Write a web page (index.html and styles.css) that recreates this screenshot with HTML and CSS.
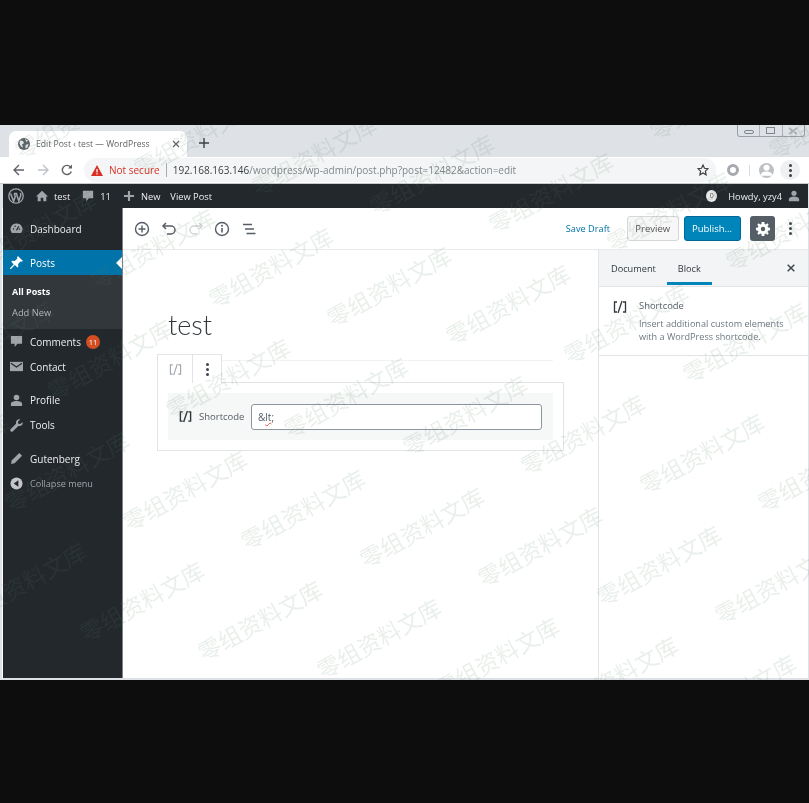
FILE: index.html
```html
<!DOCTYPE html>
<html lang="en">
<head>
  <meta charset="UTF-8">
  <title>Edit Post ‹ test — WordPress</title>
  <link rel="stylesheet" href="styles.css">
</head>
<body>

  <div class="window">

    <div class="tabstrip">
      <div class="tab">
        <svg class="favicon" viewBox="0 0 12 12"><circle cx="6" cy="6" r="6" fill="#5f6368"/><path d="M2 2.500l3 .5 1 2-2 1.500 1 3-2-1-1.500-3zM7 1l3 1.500-1.500 1.500zM7.500 7l3-1-1 3.500-2 1z" fill="#e8eaed"/></svg>
        <span class="tab-title">Edit Post ‹ test — WordPress</span>
        <svg class="tab-close" viewBox="0 0 8 8"><path d="M1 1l6 6M7 1L1 7" stroke="#5f6368" stroke-width="1.200"/></svg>
      </div>
      <svg class="new-tab" viewBox="0 0 10 10"><path d="M5 0v10M0 5h10" stroke="#3c4043" stroke-width="1.400"/></svg>
      <div class="win-controls">
        <span class="win-btn"><i class="win-min"></i></span>
        <span class="win-btn"><i class="win-max"></i></span>
        <span class="win-btn win-close">
          <svg viewBox="0 0 10 8"><path d="M1 1l8 6M9 1L1 7" stroke="#aeb3b8" stroke-width="1.800"/></svg>
        </span>
      </div>
    </div>

    <div class="toolbar">
      <svg class="nav-icon" viewBox="0 0 12 12"><path d="M11 6H1.500M6 1L1 6l5 5" fill="none" stroke="#5f6368" stroke-width="1.400"/></svg>
      <svg class="nav-icon" viewBox="0 0 12 12"><path d="M1 6h9.500M6 1l5 5-5 5" fill="none" stroke="#bdc1c6" stroke-width="1.400"/></svg>
      <svg class="nav-icon" viewBox="0 0 12 12"><path d="M10.300 7.500A4.600 4.600 0 1 1 9.500 3" fill="none" stroke="#5f6368" stroke-width="1.400"/><path d="M11 0.500v4H7z" fill="#5f6368"/></svg>
      <div class="omnibox">
        <svg class="warn" viewBox="0 0 12 11"><path d="M6 0l6 11H0z" fill="#d93025"/><path d="M5.400 4h1.200v3.500H5.400zM5.400 8.200h1.200v1.200H5.400z" fill="#fff"/></svg>
        <span class="not-secure">Not secure</span>
        <span class="omni-sep"></span>
        <span class="url"><b>192.168.163.146</b>/wordpress/wp-admin/post.php?post=12482&amp;action=edit</span>
        <svg class="star" viewBox="0 0 12 12"><path d="M6 1l1.500 3.300 3.500.4-2.600 2.400.7 3.600L6 8.900l-3.100 1.800.7-3.600L1 4.700l3.500-.4z" fill="none" stroke="#3c4043" stroke-width="1.200"/></svg>
      </div>
      <span class="ext-ring"></span>
      <span class="ext-sep"></span>
      <span class="avatar">
        <svg viewBox="0 0 14 14"><circle cx="7" cy="4.500" r="2.800" fill="#fff"/><path d="M1.500 12c0-3 3-4 5.500-4s5.500 1 5.500 4z" fill="#fff"/></svg>
      </span>
      <span class="chrome-menu"><i></i><i></i><i></i></span>
    </div>

    <div class="adminbar">
      <svg class="wp-logo" viewBox="0 0 16 16"><circle cx="8" cy="8" r="7.200" fill="none" stroke="#a0a5aa" stroke-width="1.300"/><path d="M2.600 5.500l3 7.800 1.700-4.800-1.200-3M6 5.500h3.200M8.300 5.500l2.500 7.500 1.900-5.500c.4-1 0-1.800-.4-2.400" fill="none" stroke="#a0a5aa" stroke-width="1.500"/></svg>
      <svg class="bar-icon home-icon" viewBox="0 0 14 14"><path d="M7 1L0 7.500h2V13h3.500V9h3v4H12V7.500h2z" fill="#a0a5aa"/></svg>
      <span class="bar-link bar-site">test</span>
      <svg class="bar-icon comment-icon" viewBox="0 0 14 14"><path d="M1 1h12v8.500H8L5 13V9.500H1z" fill="#a0a5aa"/></svg>
      <span class="bar-link bar-count">11</span>
      <svg class="bar-icon plus-icon" viewBox="0 0 12 12"><path d="M6 0v12M0 6h12" stroke="#a0a5aa" stroke-width="2.600"/></svg>
      <span class="bar-link bar-new">New</span>
      <span class="bar-link">View Post</span>
      <span class="bar-spacer"></span>
      <span class="bar-badge">0</span>
      <span class="bar-link bar-howdy">Howdy, yzy4</span>
      <svg class="bar-icon user-icon" viewBox="0 0 14 14"><circle cx="7" cy="3.800" r="3" fill="#a0a5aa"/><path d="M1 13v-2.500C1 8.500 4 7.500 7 7.500s6 1 6 3V13z" fill="#a0a5aa"/></svg>
    </div>

    <div class="admin-body">

      <nav class="adminmenu">
        <a class="menu-item menu-first">
          <svg viewBox="0 0 14 14"><path d="M7 1.500a6.300 6.300 0 0 0-5 10.300h10A6.300 6.300 0 0 0 7 1.500z" fill="#a0a5aa"/><path d="M7 9l2.500-4.500" stroke="#23282d" stroke-width="1.300"/><circle cx="3.800" cy="7.500" r=".8" fill="#23282d"/><circle cx="5.500" cy="4.500" r=".8" fill="#23282d"/><circle cx="10.200" cy="7.500" r=".8" fill="#23282d"/></svg>
          Dashboard
        </a>
        <a class="menu-item menu-current">
          <svg viewBox="0 0 14 14"><path d="M8.500 0l5.500 5.500-1.300.8-1-.6-3 3 .3 2.800-1 1-2.700-2.800L1 14l-1 0 0-.8 4-4.300L1.300 6.200l1-1 2.800.3 3-3-.6-1z" fill="#fff"/></svg>
          Posts
        </a>
        <div class="submenu">
          <a class="sub-current">All Posts</a>
          <a>Add New</a>
        </div>
        <a class="menu-item">
          <svg viewBox="0 0 14 14"><path d="M1 1h12v8.500H8L5 13V9.500H1z" fill="#a0a5aa"/></svg>
          Comments <span class="count-badge">11</span>
        </a>
        <a class="menu-item">
          <svg viewBox="0 0 14 14"><path d="M0 2h14v10H0z" fill="#a0a5aa"/><path d="M1 3.500l6 4 6-4" fill="none" stroke="#23282d" stroke-width="1.300"/></svg>
          Contact
        </a>
        <a class="menu-item menu-gap">
          <svg viewBox="0 0 14 14"><circle cx="7" cy="3.800" r="3" fill="#a0a5aa"/><path d="M1 13v-2.500C1 8.500 4 7.500 7 7.500s6 1 6 3V13z" fill="#a0a5aa"/></svg>
          Profile
        </a>
        <a class="menu-item">
          <svg viewBox="0 0 14 14"><path d="M13.500 3.500l-2.500 2-2-.5-.5-2L11 .5C8.500-.3 6 1.500 6.500 5L.8 10.800a1.600 1.600 0 0 0 2.400 2.400L9 7.500c3.500.5 5.300-1.500 4.500-4z" fill="#a0a5aa"/></svg>
          Tools
        </a>
        <a class="menu-item menu-gap">
          <svg viewBox="0 0 14 14"><path d="M10 1l3 3-8 8-4 1 1-4z" fill="#a0a5aa"/></svg>
          Gutenberg
        </a>
        <a class="menu-item menu-collapse">
          <svg viewBox="0 0 14 14"><circle cx="7" cy="7" r="6.500" fill="#c4c7ca"/><path d="M9 3.500v7L4 7z" fill="#23282d"/></svg>
          Collapse menu
        </a>
      </nav>

      <div class="editor">
        <header class="editor-header">
          <svg class="tool-icon" viewBox="0 0 16 16"><circle cx="8" cy="8" r="6.500" fill="none" stroke="#555d66" stroke-width="1.400"/><path d="M8 4.500v7M4.500 8h7" stroke="#555d66" stroke-width="1.400"/></svg>
          <svg class="tool-icon" viewBox="0 0 16 16"><path d="M5 2L2 5l3 3" fill="none" stroke="#555d66" stroke-width="1.500"/><path d="M2.500 5H10a3.800 3.800 0 0 1 0 8H6" fill="none" stroke="#555d66" stroke-width="1.500"/></svg>
          <svg class="tool-icon" viewBox="0 0 16 16"><path d="M11 2l3 3-3 3" fill="none" stroke="#d0d3d6" stroke-width="1.500"/><path d="M13.500 5H6a3.800 3.800 0 0 0 0 8h4" fill="none" stroke="#d0d3d6" stroke-width="1.500"/></svg>
          <svg class="tool-icon" viewBox="0 0 16 16"><circle cx="8" cy="8" r="6.500" fill="none" stroke="#555d66" stroke-width="1.400"/><path d="M8 7v4.500" stroke="#555d66" stroke-width="1.600"/><circle cx="8" cy="4.800" r="1" fill="#555d66"/></svg>
          <svg class="tool-icon" viewBox="0 0 16 16"><path d="M2 3.500h9M4 8h9M5.500 12.500h9" stroke="#555d66" stroke-width="1.400"/></svg>
          <span class="header-spacer"></span>
          <a class="save-draft">Save Draft</a>
          <button class="btn-preview">Preview</button>
          <button class="btn-publish">Publish...</button>
          <span class="btn-gear">
            <svg viewBox="0 0 16 16"><path fill-rule="evenodd" d="M6.500 0h3l.4 2.200 1.300.6L13 1.500 14.500 3l-1.300 1.900.6 1.300 2.200.3v3l-2.200.4-.6 1.300 1.300 1.800-1.500 1.500-1.800-1.300-1.300.6-.4 2.200h-3l-.3-2.200-1.300-.6L3 14.500 1.500 13l1.300-1.800-.6-1.300L0 9.500v-3l2.200-.3.6-1.300L1.500 3 3 1.500l1.900 1.300 1.300-.6zM8 5.500a2.500 2.500 0 1 0 0 5 2.500 2.500 0 0 0 0-5z" fill="#fff"/></svg>
          </span>
          <span class="kebab"><i></i><i></i><i></i></span>
        </header>

        <div class="editor-body">
          <main class="canvas">
            <h1 class="post-title">test</h1>
            <div class="block-bar">
              <span class="block-tool block-type">
                <svg viewBox="0 0 16 14"><path d="M5 2H2.500v10H5M10 1L6 13M11 2h2.500v10H11" fill="none" stroke="#a0a5aa" stroke-width="1.200"/></svg>
              </span>
              <span class="block-tool"><span class="kebab kebab-small"><i></i><i></i><i></i></span></span>
              <span class="block-rule"></span>
            </div>
            <div class="block">
              <div class="shortcode">
                <span class="shortcode-label">
                  <svg viewBox="0 0 16 14"><path d="M5 2H2.500v10H5M10 1L6 13M11 2h2.500v10H11" fill="none" stroke="#32373c" stroke-width="1.500"/></svg>
                  Shortcode
                </span>
                <div class="shortcode-input">&amp;<u>lt</u>;</div>
              </div>
            </div>
          </main>

          <aside class="settings">
            <div class="settings-tabs">
              <span class="settings-tab">Document</span>
              <span class="settings-tab settings-tab-on">Block</span>
              <svg class="settings-close" viewBox="0 0 8 8"><path d="M.7.7l6.600 6.600M7.300.7L.7 7.300" stroke="#40464d" stroke-width="1.500"/></svg>
            </div>
            <div class="block-card">
              <svg class="block-card-icon" viewBox="0 0 16 14"><path d="M5 2H2.500v10H5M10 1L6 13M11 2h2.500v10H11" fill="none" stroke="#32373c" stroke-width="1.300"/></svg>
              <div>
                <div class="block-card-name">Shortcode</div>
                <p class="block-card-desc">Insert additional custom elements with a WordPress shortcode.</p>
              </div>
            </div>
          </aside>
        </div>
      </div>
    </div>

    <svg class="watermarks" viewBox="0 0 809 555">
      <text transform="translate(656 16) rotate(-29)">零组资料文库</text>
      <text transform="translate(775 35) rotate(-29)">零组资料文库</text>

      <text transform="translate(21 35) rotate(-29)">零组资料文库</text>
      <text transform="translate(140 53) rotate(-29)">零组资料文库</text>
      <text transform="translate(258 72) rotate(-29)">零组资料文库</text>
      <text transform="translate(376 91) rotate(-29)">零组资料文库</text>
      <text transform="translate(495 109) rotate(-29)">零组资料文库</text>
      <text transform="translate(613 128) rotate(-29)">零组资料文库</text>
      <text transform="translate(732 147) rotate(-29)">零组资料文库</text>

      <text transform="translate(-22 147) rotate(-29)">零组资料文库</text>
      <text transform="translate(97 165) rotate(-29)">零组资料文库</text>
      <text transform="translate(215 184) rotate(-29)">零组资料文库</text>
      <text transform="translate(333 203) rotate(-29)">零组资料文库</text>
      <text transform="translate(452 221) rotate(-29)">零组资料文库</text>
      <text transform="translate(570 240) rotate(-29)">零组资料文库</text>
      <text transform="translate(689 259) rotate(-29)">零组资料文库</text>

      <text transform="translate(-65 258) rotate(-29)">零组资料文库</text>
      <text transform="translate(54 276) rotate(-29)">零组资料文库</text>
      <text transform="translate(172 295) rotate(-29)">零组资料文库</text>
      <text transform="translate(290 314) rotate(-29)">零组资料文库</text>
      <text transform="translate(409 332) rotate(-29)">零组资料文库</text>
      <text transform="translate(527 351) rotate(-29)">零组资料文库</text>
      <text transform="translate(646 370) rotate(-29)">零组资料文库</text>
      <text transform="translate(764 388) rotate(-29)">零组资料文库</text>

      <text transform="translate(-108 370) rotate(-29)">零组资料文库</text>
      <text transform="translate(11 388) rotate(-29)">零组资料文库</text>
      <text transform="translate(129 407) rotate(-29)">零组资料文库</text>
      <text transform="translate(247 426) rotate(-29)">零组资料文库</text>
      <text transform="translate(366 444) rotate(-29)">零组资料文库</text>
      <text transform="translate(484 463) rotate(-29)">零组资料文库</text>
      <text transform="translate(603 482) rotate(-29)">零组资料文库</text>
      <text transform="translate(721 500) rotate(-29)">零组资料文库</text>

      <text transform="translate(-32 499) rotate(-29)">零组资料文库</text>
      <text transform="translate(86 518) rotate(-29)">零组资料文库</text>
      <text transform="translate(204 537) rotate(-29)">零组资料文库</text>
      <text transform="translate(323 555) rotate(-29)">零组资料文库</text>
      <text transform="translate(441 574) rotate(-29)">零组资料文库</text>
      <text transform="translate(560 593) rotate(-29)">零组资料文库</text>
      <text transform="translate(678 611) rotate(-29)">零组资料文库</text>
    </svg>

  </div>

</body>
</html>
```

FILE: styles.css
```css
* {
  box-sizing: border-box;
}
html, body {
  margin: 0;
  height: 100%;
}
body {
  background-color: #0d0d0d;
  padding-top: 125px;
  font-family: "Open Sans", "Noto Sans", Arial, sans-serif;
  font-size: 10px;
  overflow: hidden;
}
svg {
  display: block;
  flex: none;
}
.window {
  position: relative;
  height: 555px;
  background-color: #dee1e6;
  padding: 0 1px 2px 2px;
  display: flex;
  flex-direction: column;
  overflow: hidden;
  filter: blur(.35px);
}

/* chrome */
.tabstrip {
  height: 32px;
  display: flex;
  align-items: flex-end;
  margin-left: -2px;
  margin-right: -1px;
  padding-left: 9px;
  flex: none;
}
.tab {
  width: 178px;
  height: 26px;
  background-color: #fff;
  border-radius: 7px 7px 0 0;
  display: flex;
  align-items: center;
  padding-left: 9px;
  color: #5f6368;
  font-size: 8.6px;
}
.favicon {
  width: 12px;
  height: 12px;
  margin-right: 6px;
}
.tab-title {
  flex: 1;
  white-space: nowrap;
}
.tab-close {
  width: 8px;
  height: 8px;
  margin-right: 7px;
}
.new-tab {
  width: 10px;
  height: 10px;
  margin: 0 0 9px 12px;
}
.win-controls {
  margin-left: auto;
  align-self: flex-start;
  display: flex;
  width: 68px;
  height: 12px;
  margin-right: 4px;
  border: 1px solid #9aa0a6;
  border-top: none;
  border-radius: 0 0 3px 3px;
}
.win-btn {
  flex: 1;
  display: flex;
  align-items: center;
  justify-content: center;
  border-left: 1px solid #aeb3b8;
}
.win-btn:first-child {
  border-left: none;
}
.win-min {
  width: 10px;
  height: 4px;
  border: 1px solid #80868b;
  border-radius: 2px;
  margin-top: 3px;
}
.win-max {
  width: 9px;
  height: 7px;
  border: 1px solid #80868b;
}
.win-close svg {
  width: 10px;
  height: 8px;
}
.toolbar {
  height: 27px;
  margin-left: -2px;
  margin-right: -1px;
  background-color: #fff;
  border-bottom: 1px solid #c8cacd;
  display: flex;
  align-items: center;
  flex: none;
  padding-left: 13px;
}
.nav-icon {
  width: 12px;
  height: 12px;
  margin-right: 12px;
}
.omnibox {
  width: 632px;
  height: 24px;
  margin-left: -1px;
  border-radius: 12px;
  background-color: #f4f5f6;
  display: flex;
  align-items: center;
  padding-left: 7px;
  font-size: 10px;
  color: #80868b;
  white-space: nowrap;
}
.warn {
  width: 12px;
  height: 11px;
  margin-right: 6px;
}
.not-secure {
  color: #d93025;
}
.omni-sep {
  width: 1px;
  height: 14px;
  background-color: #a8acb0;
  margin: 0 6px;
}
.url b {
  font-weight: 400;
  color: #3c4043;
}
.star {
  width: 12px;
  height: 12px;
  margin-left: auto;
  margin-right: 7px;
}
.ext-ring {
  width: 12px;
  height: 12px;
  border: 3px solid #a6a9ad;
  border-radius: 50%;
  margin-left: 11px;
}
.ext-sep {
  width: 1px;
  height: 11px;
  background-color: #dadce0;
  margin-left: 10px;
}
.avatar {
  width: 15px;
  height: 15px;
  border-radius: 50%;
  background-color: #bdc1c6;
  margin-left: 9px;
  overflow: hidden;
}
.chrome-menu {
  width: 20px;
  height: 20px;
  border-radius: 50%;
  background-color: #eef0f1;
  margin-left: 6px;
  display: flex;
  flex-direction: column;
  align-items: center;
  justify-content: center;
  gap: 2px;
}
.chrome-menu i {
  width: 3px;
  height: 3px;
  border-radius: 50%;
  background-color: #3c4043;
}

/* admin bar */
.adminbar {
  height: 24px;
  margin-left: 1px;
  background-color: #23282d;
  color: #eee;
  font-size: 9.3px;
  display: flex;
  align-items: center;
  flex: none;
  padding-left: 5px;
  white-space: nowrap;
}
.wp-logo {
  width: 16px;
  height: 16px;
  margin-right: 12px;
}
.bar-icon {
  width: 12px;
  height: 12px;
}
.bar-site {
  margin-left: 6px;
}
.comment-icon {
  margin-left: 12px;
}
.bar-count {
  margin-left: 6px;
}
.plus-icon {
  width: 10px;
  height: 10px;
  margin-left: 13px;
}
.bar-new {
  margin: 0 10px 0 7px;
}
.bar-spacer {
  flex: 1;
}
.bar-badge {
  width: 11px;
  height: 12px;
  border-radius: 50%;
  background-color: #e8e8e8;
  color: #555;
  font-size: 7px;
  line-height: 12px;
  text-align: center;
}
.bar-howdy {
  margin-left: 11px;
}
.user-icon {
  margin: 0 8px 0 6px;
}

.admin-body {
  flex: 1;
  display: flex;
  min-height: 0;
  background-color: #fff;
}

/* left menu */
.adminmenu {
  width: 120px;
  margin-left: 1px;
  background-color: #23282d;
  border-right: 1px solid #7c8288;
  color: #eee;
  flex: none;
  padding-top: 8px;
}
.menu-item {
  position: relative;
  height: 25px;
  display: flex;
  align-items: center;
  gap: 7px;
  padding-left: 7px;
  white-space: nowrap;
  font-size: 10px;
}
.menu-item svg {
  width: 13px;
  height: 13px;
}
.menu-first {
  margin-bottom: 9px;
}
.menu-current {
  background-color: #0073aa;
  color: #fff;
}
.menu-current::after {
  content: "";
  position: absolute;
  right: 0;
  top: 7px;
  border: 6px solid transparent;
  border-right-color: #fff;
  border-left-width: 0;
}
.submenu {
  background-color: #32373c;
  height: 54px;
  padding: 6px 0 0 9px;
  font-size: 9.3px;
  color: #b4b9be;
}
.submenu a {
  display: block;
  line-height: 21px;
}
.submenu .sub-current {
  color: #fff;
  font-weight: 700;
  font-size: 9px;
}
.count-badge {
  background-color: #d54e21;
  color: #fff;
  font-size: 7.5px;
  line-height: 14px;
  height: 14px;
  width: 14px;
  border-radius: 50%;
  text-align: center;
  margin-left: -2px;
}
.menu-gap {
  margin-top: 8.5px;
}
.menu-collapse {
  color: #a0a5aa;
  font-size: 9.1px;
}

/* editor */
.editor {
  flex: 1;
  display: flex;
  flex-direction: column;
  min-width: 0;
}
.editor-header {
  height: 42px;
  border-bottom: 1px solid #e8eaeb;
  display: flex;
  align-items: center;
  padding-left: 11px;
  gap: 10.75px;
  flex: none;
}
.tool-icon {
  width: 16px;
  height: 16px;
}
.header-spacer {
  flex: 1;
}
.save-draft {
  color: #0073aa;
  font-size: 9.2px;
  margin-right: 6px;
}
button {
  font-family: inherit;
  font-size: 9.5px;
  border-radius: 3px;
  padding: 0;
}
.btn-preview {
  width: 52px;
  height: 25px;
  border: 1px solid #d4d7da;
  background-color: #f7f7f7;
  color: #555;
}
.btn-publish {
  width: 57px;
  height: 25px;
  margin-left: -6px;
  background-color: #0085ba;
  border: 1px solid #006799;
  color: #fff;
}
.btn-gear {
  width: 25px;
  height: 25px;
  border-radius: 3px;
  background-color: #555d66;
  display: flex;
  align-items: center;
  justify-content: center;
  margin-left: -1px;
}
.btn-gear svg {
  width: 14px;
  height: 14px;
}
.kebab {
  width: 3px;
  display: flex;
  flex-direction: column;
  gap: 2px;
  margin: 0 16px 0 3px;
}
.kebab i {
  height: 3px;
  border-radius: 50%;
  background-color: #40464d;
}
.kebab-small {
  margin: 0;
}
.editor-body {
  flex: 1;
  display: flex;
  min-height: 0;
}
.canvas {
  flex: 1;
  padding: 56px 34px 0 34px;
}
.post-title {
  margin: 0 0 10px 11px;
  height: 38px;
  font-family: Lato, sans-serif;
  font-weight: 300;
  font-size: 27px;
  line-height: 38px;
  color: #32373c;
}
.block-bar {
  display: flex;
  height: 29px;
  margin-bottom: -1px;
}
.block-tool {
  height: 29px;
  border: 1px solid #e2e4e7;
  border-bottom: none;
  display: flex;
  align-items: center;
  justify-content: center;
  background-color: #fff;
}
.block-type {
  width: 36px;
}
.block-type svg {
  width: 15px;
  height: 13px;
}
.block-tool + .block-tool {
  width: 29px;
  border-left: none;
}
.block-rule {
  flex: 1;
  height: 1px;
  margin: 6px 11px 0 0;
  background-color: #f1f2f3;
}
.block {
  height: 69px;
  border: 1px solid #e2e4e7;
  padding: 10px 10px 0;
}
.shortcode {
  height: 47px;
  background-color: #f6f7f7;
  display: flex;
  align-items: center;
  padding-left: 10px;
}
.shortcode-label {
  width: 73px;
  font-size: 9.5px;
  color: #555d66;
  display: flex;
  align-items: center;
  gap: 6px;
  white-space: nowrap;
}
.shortcode-label svg {
  width: 15px;
  height: 13px;
}
.shortcode-input {
  width: 291px;
  height: 26px;
  border: 1px solid #8d96a0;
  border-radius: 3px;
  background-color: #fff;
  font-size: 10px;
  line-height: 25px;
  padding-left: 6px;
  color: #555d66;
}
.shortcode-input u {
  text-decoration: underline wavy #e05050 1px;
}

/* settings panel */
.settings {
  width: 210px;
  border-left: 1px solid #e2e4e7;
  flex: none;
}
.settings-tabs {
  height: 37px;
  background-color: #f3f4f5;
  border-bottom: 1px solid #e2e4e7;
  display: flex;
  align-items: center;
  font-size: 9.2px;
  color: #32373c;
  padding-left: 12px;
  gap: 22px;
}
.settings-tab {
  position: relative;
}
.settings-tab-on::after {
  content: "";
  position: absolute;
  left: -11px;
  right: -11px;
  top: 20px;
  height: 3px;
  background-color: #0085ba;
}
.settings-close {
  width: 8px;
  height: 8px;
  margin-left: auto;
  margin-right: 13px;
}
.block-card {
  height: 69px;
  border-bottom: 1px solid #e2e4e7;
  display: flex;
  padding: 12px 12px 0 13px;
  gap: 11px;
}
.block-card-icon {
  width: 16px;
  height: 14px;
  margin-top: 1px;
}
.block-card-name {
  font-size: 9.4px;
  color: #555d66;
  line-height: 13px;
}
.block-card-desc {
  margin: 5px 0 0;
  font-size: 9.1px;
  line-height: 13px;
  color: #6c7781;
}

/* watermark */
.watermarks {
  position: absolute;
  left: 0;
  top: 0;
  width: 809px;
  height: 555px;
  pointer-events: none;
}
.watermarks text {
  font-family: "Noto Sans CJK SC", sans-serif;
  font-size: 23px;
  fill: rgba(86, 135, 95, .13);
}
```
